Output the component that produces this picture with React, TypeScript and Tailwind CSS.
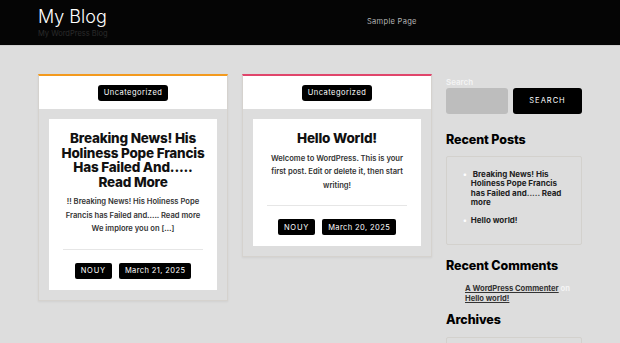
import React from "react";

const posts = [
  {
    accent: "border-t-[#f39a1e]",
    title: ["Breaking News! His", "Holiness Pope Francis", "Has Failed And.....", "Read More"],
    excerpt: ["!! Breaking News! His Holiness Pope", "Francis has Failed and..... Read more", "We implore you on […]"],
    date: "March 21, 2025",
  },
  {
    accent: "border-t-[#e0456b]",
    title: ["Hello World!"],
    excerpt: ["Welcome to WordPress. This is your", "first post. Edit or delete it, then start", "writing!"],
    date: "March 20, 2025",
  },
];

function PostCard({ post }: { post: (typeof posts)[number] }) {
  return (
    <div className={`w-[190px] border-t-2 ${post.accent} bg-[#dddddd] border-x border-b border-x-[#d5d2ce] border-b-[#d5d2ce] shadow-[0_1px_2px_rgba(0,0,0,0.06)] pb-[10px]`}>
      <div className="h-[33px] bg-white flex items-center justify-center">
        <span className="bg-black text-white rounded-[3px] h-[16px] px-[6px] flex items-center text-[7.5px] tracking-[0.5px]">
          Uncategorized
        </span>
      </div>
      <div className="mx-[10px] mt-[10px] bg-white px-[8px] pt-[12px] pb-[11px] flex flex-col items-center">
        <h2 className="text-center text-[13.5px] leading-[14.5px] font-extrabold text-[#111] tracking-[-0.2px] whitespace-nowrap">
          {post.title.map((l) => (
            <div key={l}>{l}</div>
          ))}
        </h2>
        <div className="mt-[6px] text-center text-[7.6px] leading-[13.6px] font-semibold text-[#333] whitespace-nowrap">
          {post.excerpt.map((l) => (
            <div key={l}>{l}</div>
          ))}
        </div>
        <div className="w-[140px] h-px bg-[#e6e6e6] mt-[13px]" />
        <div className="flex gap-[7px] mt-[13px]">
          <span className="bg-black text-white rounded-[2px] h-[16px] px-[6px] flex items-center text-[7.5px] tracking-[0.8px]">
            NOUY
          </span>
          <span className="bg-black text-white rounded-[2px] h-[16px] px-[6px] flex items-center text-[7.5px] tracking-[0.4px]">
            {post.date}
          </span>
        </div>
      </div>
    </div>
  );
}

export default function App() {
  return (
    <div className="h-[343px] bg-[#dddddd] [font-family:Inter,'Liberation_Sans',sans-serif] overflow-hidden">
      {/* Header */}
      <header className="h-[46px] bg-[#050505] border-b border-[#cfcfcf]">
        <div className="w-[544px] mx-auto flex">
          <div className="w-[329px] pt-[7px]">
            <div className="text-white text-[18px] leading-[20px] font-light">My Blog</div>
            <div className="text-[#2b2b2b] text-[7.5px] mt-[1px]">My WordPress Blog</div>
          </div>
          <nav className="pt-[16px] text-[#b5b5b5] text-[7.5px] tracking-[0.3px]">Sample Page</nav>
        </div>
      </header>

      <main className="w-[544px] mx-auto flex gap-[14px] mt-[28px]">
        <div className="flex gap-[14px] items-start">
          {posts.map((p) => (
            <PostCard key={p.date} post={p} />
          ))}
        </div>

        {/* Sidebar */}
        <aside className="w-[136px]">
          <div className="text-[#f4f4f4] text-[8px] font-semibold leading-[10px] mt-[3px]">Search</div>
          <div className="flex gap-[5px] mt-[1px]">
            <div className="w-[62px] h-[26px] bg-[#bdbdbd] rounded-[3px]" />
            <button className="w-[69px] h-[26px] bg-black text-white rounded-[3px] text-[7.5px] tracking-[1px]">
              SEARCH
            </button>
          </div>

          <h3 className="mt-[17px] text-[12.5px] leading-[18px] font-extrabold text-black tracking-[-0.1px]">Recent Posts</h3>
          <div className="mt-[7px] h-[89px] border border-[#d3d1cd] rounded-[2px] pl-[16px] pr-[8px] pt-[13px]">
            <ul className="text-[8px] leading-[9.4px] font-bold text-[#222] whitespace-nowrap">
              <li className="flex">
                <span className="text-white mr-[4px]">•</span>
                <span>
                  &nbsp;Breaking News! His
                  <br />
                  Holiness Pope Francis
                  <br />
                  has Failed and..... Read
                  <br />
                  more
                </span>
              </li>
              <li className="flex mt-[8px]">
                <span className="text-white mr-[4px]">•</span>
                <span>Hello world!</span>
              </li>
            </ul>
          </div>

          <h3 className="mt-[12px] text-[12.5px] leading-[18px] font-extrabold text-black tracking-[-0.1px]">Recent Comments</h3>
          <div className="mt-[9px] pl-[19px] text-[7.6px] leading-[9.6px] font-bold">
            <span className="underline text-[#333]">A WordPress Commenter</span>
            <span className="text-[#f4f4f4]"> on </span>
            <br />
            <span className="underline text-[#333]">Hello world!</span>
          </div>

          <h3 className="mt-[8px] text-[12.5px] leading-[18px] font-extrabold text-black tracking-[-0.1px]">Archives</h3>
          <div className="mt-[8px] h-[40px] border border-[#d3d1cd] rounded-[2px]" />
        </aside>
      </main>
    </div>
  );
}
